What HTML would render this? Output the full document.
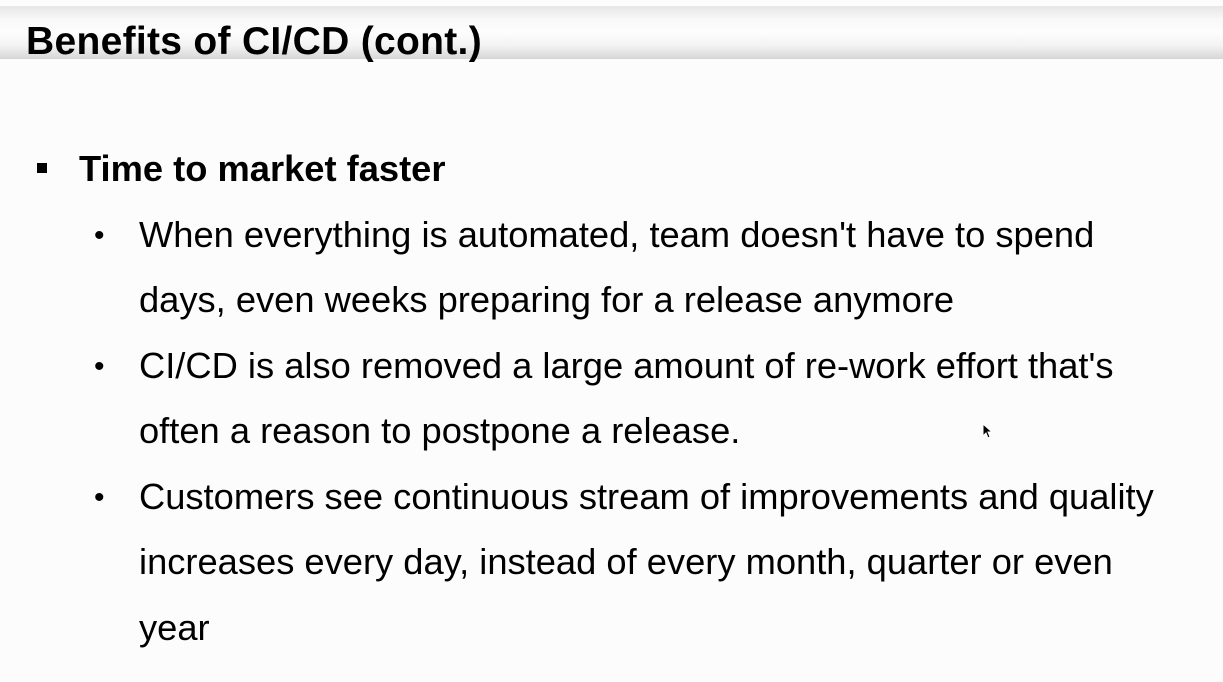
<!DOCTYPE html>
<html><head><style>
body{margin:0;width:1223px;height:682px;background:#fdfcfd;font-family:"Liberation Sans",sans-serif;color:#000;position:relative;overflow:hidden}
.bar{position:absolute;left:0;top:6px;width:1223px;height:53px;background:linear-gradient(#e6e6e6 0%,#f8f8f8 25%,#fdfdfd 50%,#f3f3f3 75%,#d6d6d6 100%)}
.t{position:absolute;left:26px;top:22px;font-size:39px;font-weight:bold;line-height:40px;white-space:nowrap;letter-spacing:0.3px}
.l{position:absolute;white-space:nowrap;font-size:36.3px;line-height:40px}
.sq{position:absolute;left:37px;top:163px;width:10px;height:10px;background:#000}
.d{position:absolute;left:94px;font-size:30px}
</style></head><body>
<div class="bar"></div>
<div class="t">Benefits of CI/CD (cont.)</div>
<div class="sq"></div>
<div class="l" style="left:79px;top:149px;font-weight:bold">Time to market faster</div>
<div class="l d" style="top:216px">•</div>
<div class="l" style="left:139px;top:215px">When everything is automated, team doesn't have to spend</div>
<div class="l" style="left:139px;top:280px">days, even weeks preparing for a release anymore</div>
<div class="l d" style="top:347px">•</div>
<div class="l" style="left:139px;top:346px">CI/CD is also removed a large amount of re-work effort that's</div>
<div class="l" style="left:139px;top:411px">often a reason to postpone a release.</div>
<div class="l d" style="top:478px">•</div>
<div class="l" style="left:139px;top:477px">Customers see continuous stream of improvements and quality</div>
<div class="l" style="left:139px;top:542px">increases every day, instead of every month, quarter or even</div>
<div class="l" style="left:139px;top:608px">year</div>
<svg style="position:absolute;left:982px;top:423px" width="10" height="16" viewBox="0 0 10 16"><path d="M1 1 L1 13 L4 10 L6 15 L8 14 L6 9 L10 9 Z" fill="#000" stroke="#fff" stroke-width="1"/></svg>
</body></html>
